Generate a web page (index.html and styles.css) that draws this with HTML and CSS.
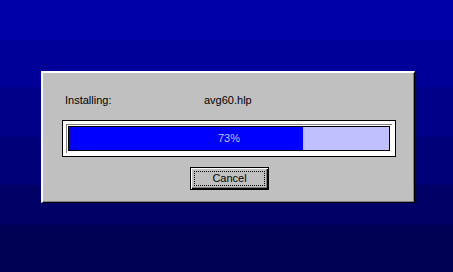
FILE: index.html
```html
<!DOCTYPE html>
<html lang="en">
<head>
    <meta charset="UTF-8">
    <title>Setup</title>
    <link rel="stylesheet" href="styles.css">
</head>
<body>
    <div class="dialog">
        <div class="status">
            <span>Installing:</span>
            <span>avg60.hlp</span>
        </div>

        <div class="frame">
            <div class="inset">
                <div class="bar">
                    <div class="fill" style="width: 73%;"></div>
                    <span class="percent">73%</span>
                </div>
            </div>
        </div>

        <div class="actions">
            <button class="btn-default"><span class="focus">Cancel</span></button>
        </div>
    </div>
</body>
</html>
```

FILE: styles.css
```css
html, body {
    height: 100%;
}
body {
    margin: 0;
    padding: 71px 0 0 41px;
    box-sizing: border-box;
    font-family: "Liberation Sans", Arial, sans-serif;
    font-size: 11px;
    background: linear-gradient(to bottom,
        #0000a8 0, #0000a8 40px,
        #000098 40px, #000098 87px,
        #000088 87px, #000088 137px,
        #000078 137px, #000078 185px,
        #000066 185px, #000066 225px,
        #000054 225px, #000054 272px);
}
.dialog {
    width: 374px;
    box-sizing: border-box;
    background: #c0c0c0;
    border-top: 2px solid #fff;
    border-left: 2px solid #fff;
    border-right: 1px solid #000;
    border-bottom: 1px solid #000;
    box-shadow: inset -1px -1px #808080;
    padding: 21px 18px 12px 19px;
}
.status {
    display: grid;
    grid-template-columns: 139px auto;
    line-height: 13px;
    padding-left: 3px;
    color: #000;
}
.frame {
    margin-top: 13px;
    border: 1px solid #000;
    background: #fff;
    padding: 3px;
}
.inset {
    border-top: 1px solid #808080;
    border-left: 1px solid #808080;
    padding: 1px 2px 2px 1px;
}
.bar {
    position: relative;
    height: 23px;
    border: 1px solid #000;
    background: #c0c0ff;
}
.fill {
    height: 100%;
    background: #0000ff;
}
.percent {
    position: absolute;
    left: 0;
    right: 0;
    top: 5px;
    text-align: center;
    color: #c0c0ff;
    line-height: 13px;
}
.actions {
    display: flex;
    justify-content: center;
    margin-top: 10px;
    padding-left: 1px;
}
.btn-default {
    width: 79px;
    height: 23px;
    padding: 3px;
    margin: 0;
    background: #c0c0c0;
    border: 1px solid #000;
    border-radius: 0;
    box-shadow: inset 1px 1px #fff, inset -1px -1px #000, inset -2px -2px #808080;
    font: inherit;
    color: #000;
    display: flex;
}
.focus {
    flex: 1;
    border: 1px dotted #000;
    line-height: 13px;
    text-align: center;
}
```
